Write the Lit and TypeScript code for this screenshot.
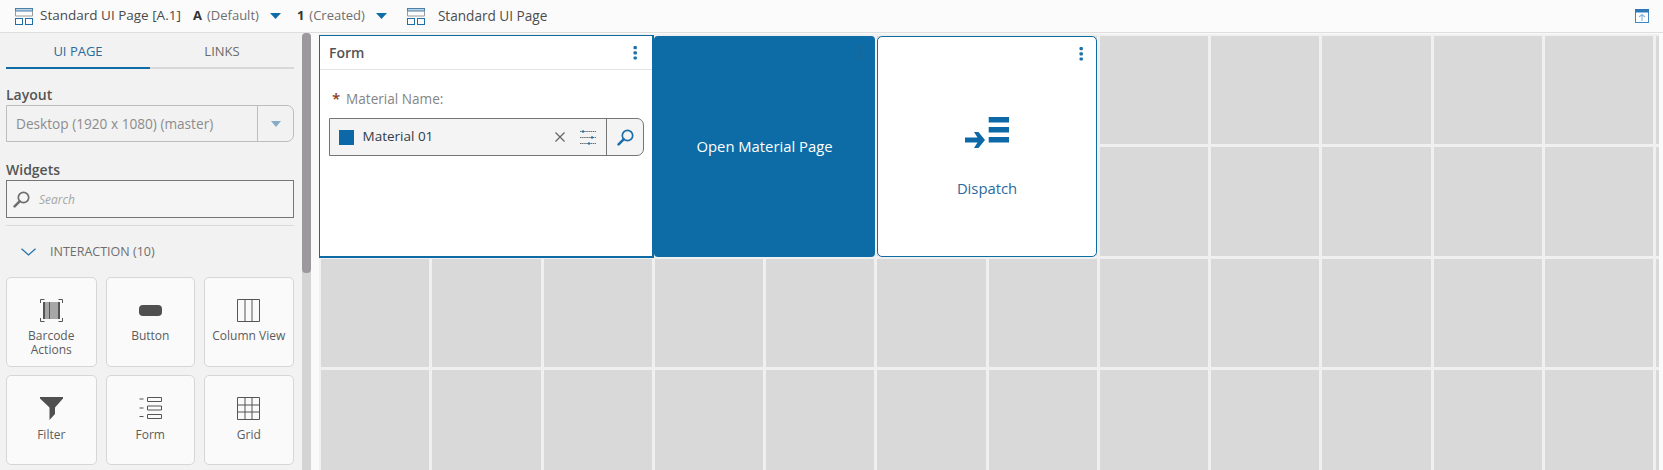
import { LitElement, html, css, svg } from "lit";
import { customElement } from "lit/decorators.js";

const pageIcon = html`<svg class="pi" width="18" height="17" viewBox="0 0 18 17" fill="none" stroke="#1f6fa8" stroke-width="1"><rect x=".5" y=".5" width="17" height="2.5" fill="#bcd3e4" stroke="#4a7fa8"/><path d="M.5 3v5h17V3" stroke="#9a9a9a"/><rect x=".5" y="10.5" width="7" height="6"/><rect x="10.5" y="10.5" width="7" height="6"/></svg>`;
const caret = html`<svg class="caret" width="11" height="6" viewBox="0 0 11 6"><path d="M0 0h11L5.5 6z" fill="#0f6ca6"/></svg>`;
const kebab = (c: string) => html`<svg width="4" height="14" viewBox="0 0 4 14" fill="${c}"><rect x=".5" width="3.4" height="3.2" rx="1"/><rect x=".5" y="5.2" width="3.4" height="3.2" rx="1"/><rect x=".5" y="10.4" width="3.4" height="3.2" rx="1"/></svg>`;
const lens = (c: string, w = 17) => html`<svg width="${w}" height="${w}" viewBox="0 0 17 17" fill="none" stroke="${c}"><circle cx="10.5" cy="6.5" r="5.2" stroke-width="1.7"/><path d="M6.6 10.4 1.6 15.4" stroke-width="2.6" stroke-linecap="round"/></svg>`;

const barcode = svg`<path d="M.5 4V.5h4M18.5.5h4V4M.5 19v3.500h4M18.500 22.500h4V19" fill="none" stroke="#555"/><path d="M3 3h2.500v17H3zM6.500 3h1v17h-1zM8.500 3h2v17h-2zM11.500 3h1v17h-1zM13.500 3h1v17h-1zM15.500 3h1v17h-1zM17.500 3h2.500v17h-2.500z" fill="#555"/>`;
const buttonI = svg`<rect y="6" width="23" height="11" rx="4" fill="#505050"/>`;
const columnI = svg`<path d="M.5.5h22v22H.5zM8 .5v22M15 .5v22" fill="none" stroke="#555"/>`;
const filterI = svg`<path d="M0 0h23v1.500L15 10.500V17l-5.500 6V10.500L0 1.500z" fill="#505050"/>`;
const formI = svg`<path d="M.5 2h4M.5 11h4M.5 19.500h4" stroke="#555" fill="none"/><path d="M8.500.5h14v4h-14zM8.500 9h14v4h-14zM8.500 17.500h14v4h-14z" fill="none" stroke="#555"/>`;
const gridI = svg`<path d="M.5.5h22v22H.5zM8 .5v22M15 .5v22M.5 8h22M.5 15h22" fill="none" stroke="#555"/>`;

const widgets = [
  { l: ["Barcode", "Actions"], i: barcode },
  { l: ["Button"], i: buttonI },
  { l: ["Column View"], i: columnI },
  { l: ["Filter"], i: filterI },
  { l: ["Form"], i: formI },
  { l: ["Grid"], i: gridI },
];

@customElement("app-root")
export class AppRoot extends LitElement {
  static styles = css`
    :host { display: block; width: 1663px; height: 470px; overflow: hidden; position: relative;
      font-family: "Open Sans", sans-serif; font-size: 13.500px; color: #4d4d4d; background: #fafafa; }
    * { box-sizing: border-box; }
    .top { height: 33px; background: #fbfbfb; border-bottom: 1px solid #dedede; display: flex; align-items: center; padding-left: 15px; white-space: nowrap; }
    .top span.t1, .top span.t2, .top span.dim, .top b { margin-bottom: 2px; }
    .top .t1 { margin-left: 7px; width: 153px; color: #4a4a4a; font-size: 13.500px; }
    .top b { font-weight: 700; color: #333; font-size: 13px; }
    .top .dim { color: #6e6e6e; margin-left: 5px; font-size: 13px; }
    .top .caret { margin-left: 11px; }
    .top .ver { margin-left: 16px; }
    .top .pi2 { margin-left: 20px; display: flex; }
    .top .t2 { margin-left: 13px; font-size: 13.600px; }
    .top .end { margin-left: auto; margin-right: 14px; display: flex; }
    .main { display: flex; height: 437px; }
    .side { width: 302px; background: #f2f2f2; padding: 0 8px 0 6px; flex: none; }
    .tabs { display: flex; height: 36px; }
    .tab { flex: 1; text-align: center; border-bottom: 2px solid #d8d8d8; line-height: 37px; color: #6b6b6b; font-size: 13px; }
    .tab.on { color: #2b6a9b; border-bottom-color: #0f6ca6; }
    .lbl { font-size: 14px; font-weight: 600; color: #555; line-height: 20px; }
    .lbl.a { margin-top: 16px; }
    .lbl.b { margin-top: 18px; }
    .sel { height: 37px; border: 1px solid #bdbdbd; border-radius: 0 7px 7px 0; display: flex; align-items: center; background: #f2f2f2; color: #8c8c8c; font-size: 13.650px; }
    .sel .v { flex: 1; padding-left: 9px; }
    .sel .arr { width: 36px; height: 100%; border-left: 1px solid #bdbdbd; display: flex; align-items: center; justify-content: center; }
    .search { height: 38px; border: 1px solid #757575; background: #f5f5f5; display: flex; align-items: center; padding-left: 6px; gap: 9px; font-style: italic; font-size: 12px; color: #a6a6a6; }
    .hr { height: 1px; background: #dadada; margin-top: 7px; }
    .sec { height: 51px; display: flex; align-items: center; padding-left: 15px; gap: 14px; font-size: 12.500px; color: #6e6e6e; }
    .cards { display: grid; grid-template-columns: 90.500px 89.500px 89.500px; column-gap: 9px; row-gap: 8px; }
    .card { height: 90px; background: #fafafa; border: 1px solid #d6d6d6; border-radius: 5px; display: flex; flex-direction: column; align-items: center; padding-top: 21px; font-size: 12px; line-height: 14px; color: #5c5c5c; text-align: center; }
    .card svg { margin-bottom: 7px; flex: none; }
    .card:nth-child(n+4) svg { margin-bottom: 8px; }
    .bar { width: 9px; background: #d4d4d4; flex: none; position: relative; border-radius: 4px 4px 0 0; }
    .thumb { height: 240px; background: #9b999b; border-radius: 4px; }
    .canvas { flex: 1; padding: 1px 0 0 8px; position: relative; overflow: hidden; background: #fafafa; }
    .grid { display: grid; grid-template-columns: repeat(12, 108.270px) 3px; grid-auto-rows: 108.270px; gap: 3px; padding: 2px 0 0 2px; margin-right: 4px; background: #f0f0f0; }
    .cell { background: #d9d9d9; }
    .w { position: absolute; background: #fff; }
    .form { left: 8px; top: 2px; width: 335px; height: 223px; border: 1px solid #0e6aa3; border-bottom-width: 2px; border-right-width: 2px; }
    .fh { height: 34px; border-bottom: 1px solid #e4e4e4; display: flex; align-items: center; justify-content: space-between; padding: 0 15px 0 9px; font-size: 14px; font-weight: 600; color: #555; }
    .fb { padding: 18px 9px 0; }
    .fl { display: flex; align-items: center; height: 20px; padding-left: 3px; gap: 7px; color: #858585; font-size: 13.600px; }
    .fl i { color: #8a3b22; font-style: normal; font-size: 15px; font-weight: 600; width: 7px; }
    .inp { margin-top: 10px; height: 38px; width: 315px; border: 1px solid #757575; border-radius: 0 7px 7px 0; background: #f4f4f4; display: flex; align-items: center; padding-left: 9px; }
    .sq { width: 15px; height: 15px; background: #0d68a8; }
    .inp .tx { margin-left: 8.500px; flex: 1; color: #303c48; font-size: 13.500px; margin-bottom: 2px; }
    .x { display: flex; margin-right: 14px; }
    .tune { display: flex; margin-right: 9px; }
    .lk { width: 37px; height: 100%; border-left: 1px solid #757575; display: flex; align-items: center; justify-content: center; }
    .btn { left: 343px; top: 3px; width: 221px; height: 221px; background: #0d6ca5; border-radius: 4px; color: #fff; display: flex; align-items: center; justify-content: center; font-size: 14.800px; padding-bottom: 2px; }
    .disp { left: 566px; top: 3px; width: 220px; height: 221px; border: 1px solid #0e6ca5; border-radius: 5px; display: flex; flex-direction: column; align-items: center; padding-top: 80px; font-size: 14.800px; color: #2b6a9b; }
    .disp span.lb { margin-top: 29px; }
    .k { position: absolute; top: 10px; display: flex; }
    .k.kb { right: 13px; }
    .k.kd { right: 13px; }
  `;

  render() {
    const cells = Array.from({ length: 52 }, () => html`<div class="cell"></div>`);
    return html`
      <div class="top">
        ${pageIcon}<span class="t1">Standard UI Page [A.1]</span>
        <b>A</b><span class="dim">(Default)</span>${caret}
        <b class="ver">1</b><span class="dim">(Created)</span>${caret}
        <span class="pi2">${pageIcon}</span><span class="t2">Standard UI Page</span>
        <span class="end"><svg width="14" height="14" viewBox="0 0 14 14"><rect x=".5" y=".5" width="13" height="13" fill="#fff" stroke="#3f86c4"/><rect width="14" height="3.500" fill="#2f78b8"/><path d="M7 12V6M4 8l3-2.500L10 8" fill="none" stroke="#8db7d8" stroke-width="1.200"/></svg></span>
      </div>
      <div class="main">
        <div class="side">
          <div class="tabs"><div class="tab on">UI PAGE</div><div class="tab">LINKS</div></div>
          <div class="lbl a">Layout</div>
          <div class="sel"><span class="v">Desktop (1920 x 1080) (master)</span><span class="arr"><svg width="10" height="6" viewBox="0 0 10 6"><path d="M0 0h10L5 6z" fill="#85abc6"/></svg></span></div>
          <div class="lbl b">Widgets</div>
          <div class="search">${lens("#6f6f6f")}<span>Search</span></div>
          <div class="hr"></div>
          <div class="sec"><svg width="15" height="8" viewBox="0 0 15 8" fill="none" stroke="#1f6fa8" stroke-width="1.200"><path d="M.5.8 7.500 7l7-6.200"/></svg>INTERACTION (10)</div>
          <div class="cards">
            ${widgets.map(w => html`<div class="card"><svg width="23" height="23" viewBox="0 0 23 23">${w.i}</svg>${w.l.map(t => html`<div>${t}</div>`)}</div>`)}
          </div>
        </div>
        <div class="bar"><div class="thumb"></div></div>
        <div class="canvas">
          <div class="grid">${cells}</div>
          <div class="w form">
            <div class="fh"><span>Form</span>${kebab("#1f6fa8")}</div>
            <div class="fb">
              <div class="fl"><i>*</i><span>Material Name:</span></div>
              <div class="inp">
                <span class="sq"></span><span class="tx">Material 01</span>
                <span class="x"><svg width="10" height="10" viewBox="0 0 10 10" stroke="#666" stroke-width="1.300"><path d="M.5.5l9 9M9.500.5l-9 9"/></svg></span>
                <span class="tune"><svg width="18" height="16" viewBox="0 0 18 16" stroke="#6b6b6b" fill="#1f6fa8"><path d="M1 2.500h16M1 8.500h16M1 14.500h16" stroke-dasharray="1.500 .6"/><circle cx="4" cy="2.500" r="1.200" stroke="none"/><circle cx="13" cy="8.500" r="1.200" stroke="none"/><circle cx="10" cy="14.500" r="1.200" stroke="none"/></svg></span>
                <span class="lk">${lens("#1b6ea8")}</span>
              </div>
            </div>
          </div>
          <div class="w btn"><span>Open Material Page</span><span class="k kb">${kebab("#1e6595")}</span></div>
          <div class="w disp">
            <span class="k kd">${kebab("#1f6fa8")}</span>
            <svg width="44" height="32" viewBox="0 0 44 32" fill="#0d68a8"><rect x="23.700" width="20.300" height="5.500"/><rect x="23.700" y="10" width="20.300" height="5.500"/><rect x="23.700" y="20" width="20.300" height="5.500"/><path d="M0 20.500h12.500L9 15h4.500l6.500 8-6.500 8H9l3.500-5.500H0z"/></svg>
            <span class="lb">Dispatch</span>
          </div>
        </div>
      </div>
    `;
  }
}
